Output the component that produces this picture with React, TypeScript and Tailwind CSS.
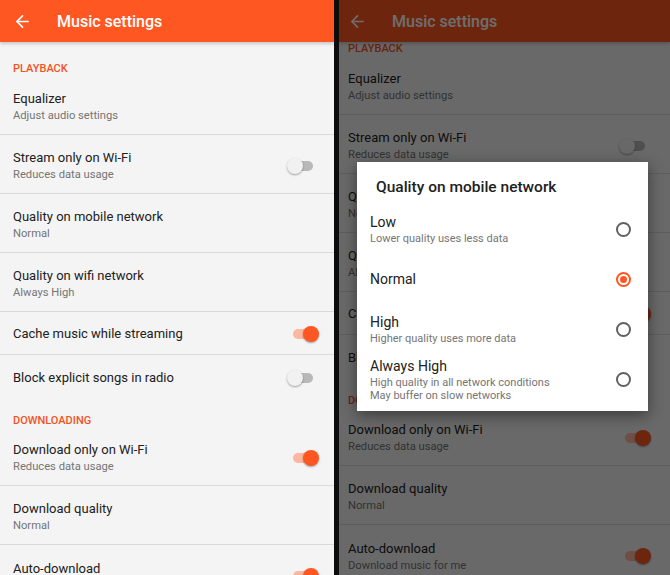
import React from 'react';
import { ArrowLeft } from 'lucide-react';

type Row = { title: string; sub?: string; toggle?: boolean };
type Section = { label: string; rows: Row[] };

const sections: Section[] = [
  {
    label: 'PLAYBACK',
    rows: [
      { title: 'Equalizer', sub: 'Adjust audio settings' },
      { title: 'Stream only on Wi-Fi', sub: 'Reduces data usage', toggle: false },
      { title: 'Quality on mobile network', sub: 'Normal' },
      { title: 'Quality on wifi network', sub: 'Always High' },
      { title: 'Cache music while streaming', toggle: true },
      { title: 'Block explicit songs in radio', toggle: false },
    ],
  },
  {
    label: 'DOWNLOADING',
    rows: [
      { title: 'Download only on Wi-Fi', sub: 'Reduces data usage', toggle: true },
      { title: 'Download quality', sub: 'Normal' },
      { title: 'Auto-download', sub: 'Download music for me', toggle: true },
    ],
  },
];

const options = [
  { title: 'Low', sub: ['Lower quality uses less data'] },
  { title: 'Normal', sub: [] as string[], selected: true },
  { title: 'High', sub: ['Higher quality uses more data'] },
  { title: 'Always High', sub: ['High quality in all network conditions', 'May buffer on slow networks'] },
];

const Toggle: React.FC<{ on: boolean }> = ({ on }) => (
  <div className="relative w-[32px] h-[16px] shrink-0">
    <div className={`absolute left-[6px] right-[6px] top-[3px] h-[10px] rounded-full ${on ? 'bg-[#fcb7a0]' : 'bg-[#b8b8b8]'}`} />
    <div
      className={`absolute top-0 w-[16px] h-[16px] rounded-full shadow-[0_1px_2px_rgba(0,0,0,0.35)] ${on ? 'right-0 bg-[#ff5722]' : 'left-0 bg-[#f1f1f1]'}`}
    />
  </div>
);

const Radio: React.FC<{ on?: boolean }> = ({ on }) => (
  <span
    className={`w-[15px] h-[15px] rounded-full border-2 flex items-center justify-center shrink-0 ${on ? 'border-[#ff5722]' : 'border-[#616161]'}`}
  >
    {on && <span className="w-[7px] h-[7px] rounded-full bg-[#ff5722]" />}
  </span>
);

// one phone screen; `narrow` is the right-hand shot, shifted 4px by the divider
const Screen: React.FC<{ narrow?: boolean; scroll?: boolean }> = ({ narrow, scroll }) => {
  const pad = narrow ? 'pl-[9px] pr-[19px]' : 'pl-[13px] pr-[15px]';
  return (
    <div className="flex flex-col h-full bg-[#f4f4f4]">
      <div className={`relative z-10 h-[42px] shrink-0 bg-[#ff5722] flex items-center pt-[1px] shadow-[0_2px_3px_rgba(0,0,0,0.18)] ${pad}`}>
        <ArrowLeft size={19} strokeWidth={2.2} className="text-white" />
        <span className="ml-[25px] text-[16px] font-medium text-white">Music settings</span>
      </div>
      <div className="flex-1 overflow-hidden">
        <div className={`pt-[4px] ${scroll ? '-mt-[20px]' : ''}`}>
          {sections.map((s, si) => (
            <div key={s.label}>
              <div className={`${si === 0 ? 'h-[30px]' : 'h-[29px]'} pt-[16px] text-[11px] leading-[14px] font-medium text-[#f4511e] ${pad}`}>{s.label}</div>
              {s.rows.map((r, i) => (
                <div
                  key={r.title}
                  className={`flex items-center justify-between ${pad} ${r.sub ? 'h-[59px] pt-[3px]' : 'h-[43px] pt-[2px]'} ${i < s.rows.length - 1 ? 'border-b border-[#dadada]' : ''}`}
                >
                  <div>
                    <div className="text-[13px] leading-[18px] text-[#212121]">{r.title}</div>
                    {r.sub && <div className="text-[11.2px] leading-[15px] text-[#757575]">{r.sub}</div>}
                  </div>
                  {r.toggle !== undefined && <Toggle on={r.toggle} />}
                </div>
              ))}
            </div>
          ))}
        </div>
      </div>
    </div>
  );
};

export default function App() {
  return (
    <div className="w-[670px] h-[575px] flex overflow-hidden font-['Roboto',sans-serif]">
      <div className="w-[334px] h-full shrink-0">
        <Screen />
      </div>
      <div className="w-[5px] h-full bg-[#0d0d0d] shrink-0" />
      <div className="relative flex-1 h-full">
        <Screen narrow scroll />
        <div className="absolute inset-0 z-20 bg-black/[0.57]" />
        <div className="absolute z-30 left-[18px] top-[162px] w-[291px] bg-white shadow-[0_4px_14px_rgba(0,0,0,0.45)] pb-[7px]">
          <div className="h-[42px] pt-[15px] pl-[19px] text-[15.5px] leading-[20px] font-medium text-[#212121]">Quality on mobile network</div>
          {options.map((o) => (
            <div key={o.title} className="h-[50px] flex items-center justify-between pl-[13px] pr-[17px]">
              <div>
                <div className="text-[14px] leading-[18px] text-[#212121]">{o.title}</div>
                {o.sub.map((t, i) => (
                  <div key={t} className={`text-[11px] text-[#757575] ${o.sub.length > 1 ? 'leading-[13px]' : 'leading-[15px]'} ${i === 0 && o.sub.length > 1 ? 'pt-[1px]' : ''}`}>
                    {t}
                  </div>
                ))}
              </div>
              <Radio on={o.selected} />
            </div>
          ))}
        </div>
      </div>
    </div>
  );
}
